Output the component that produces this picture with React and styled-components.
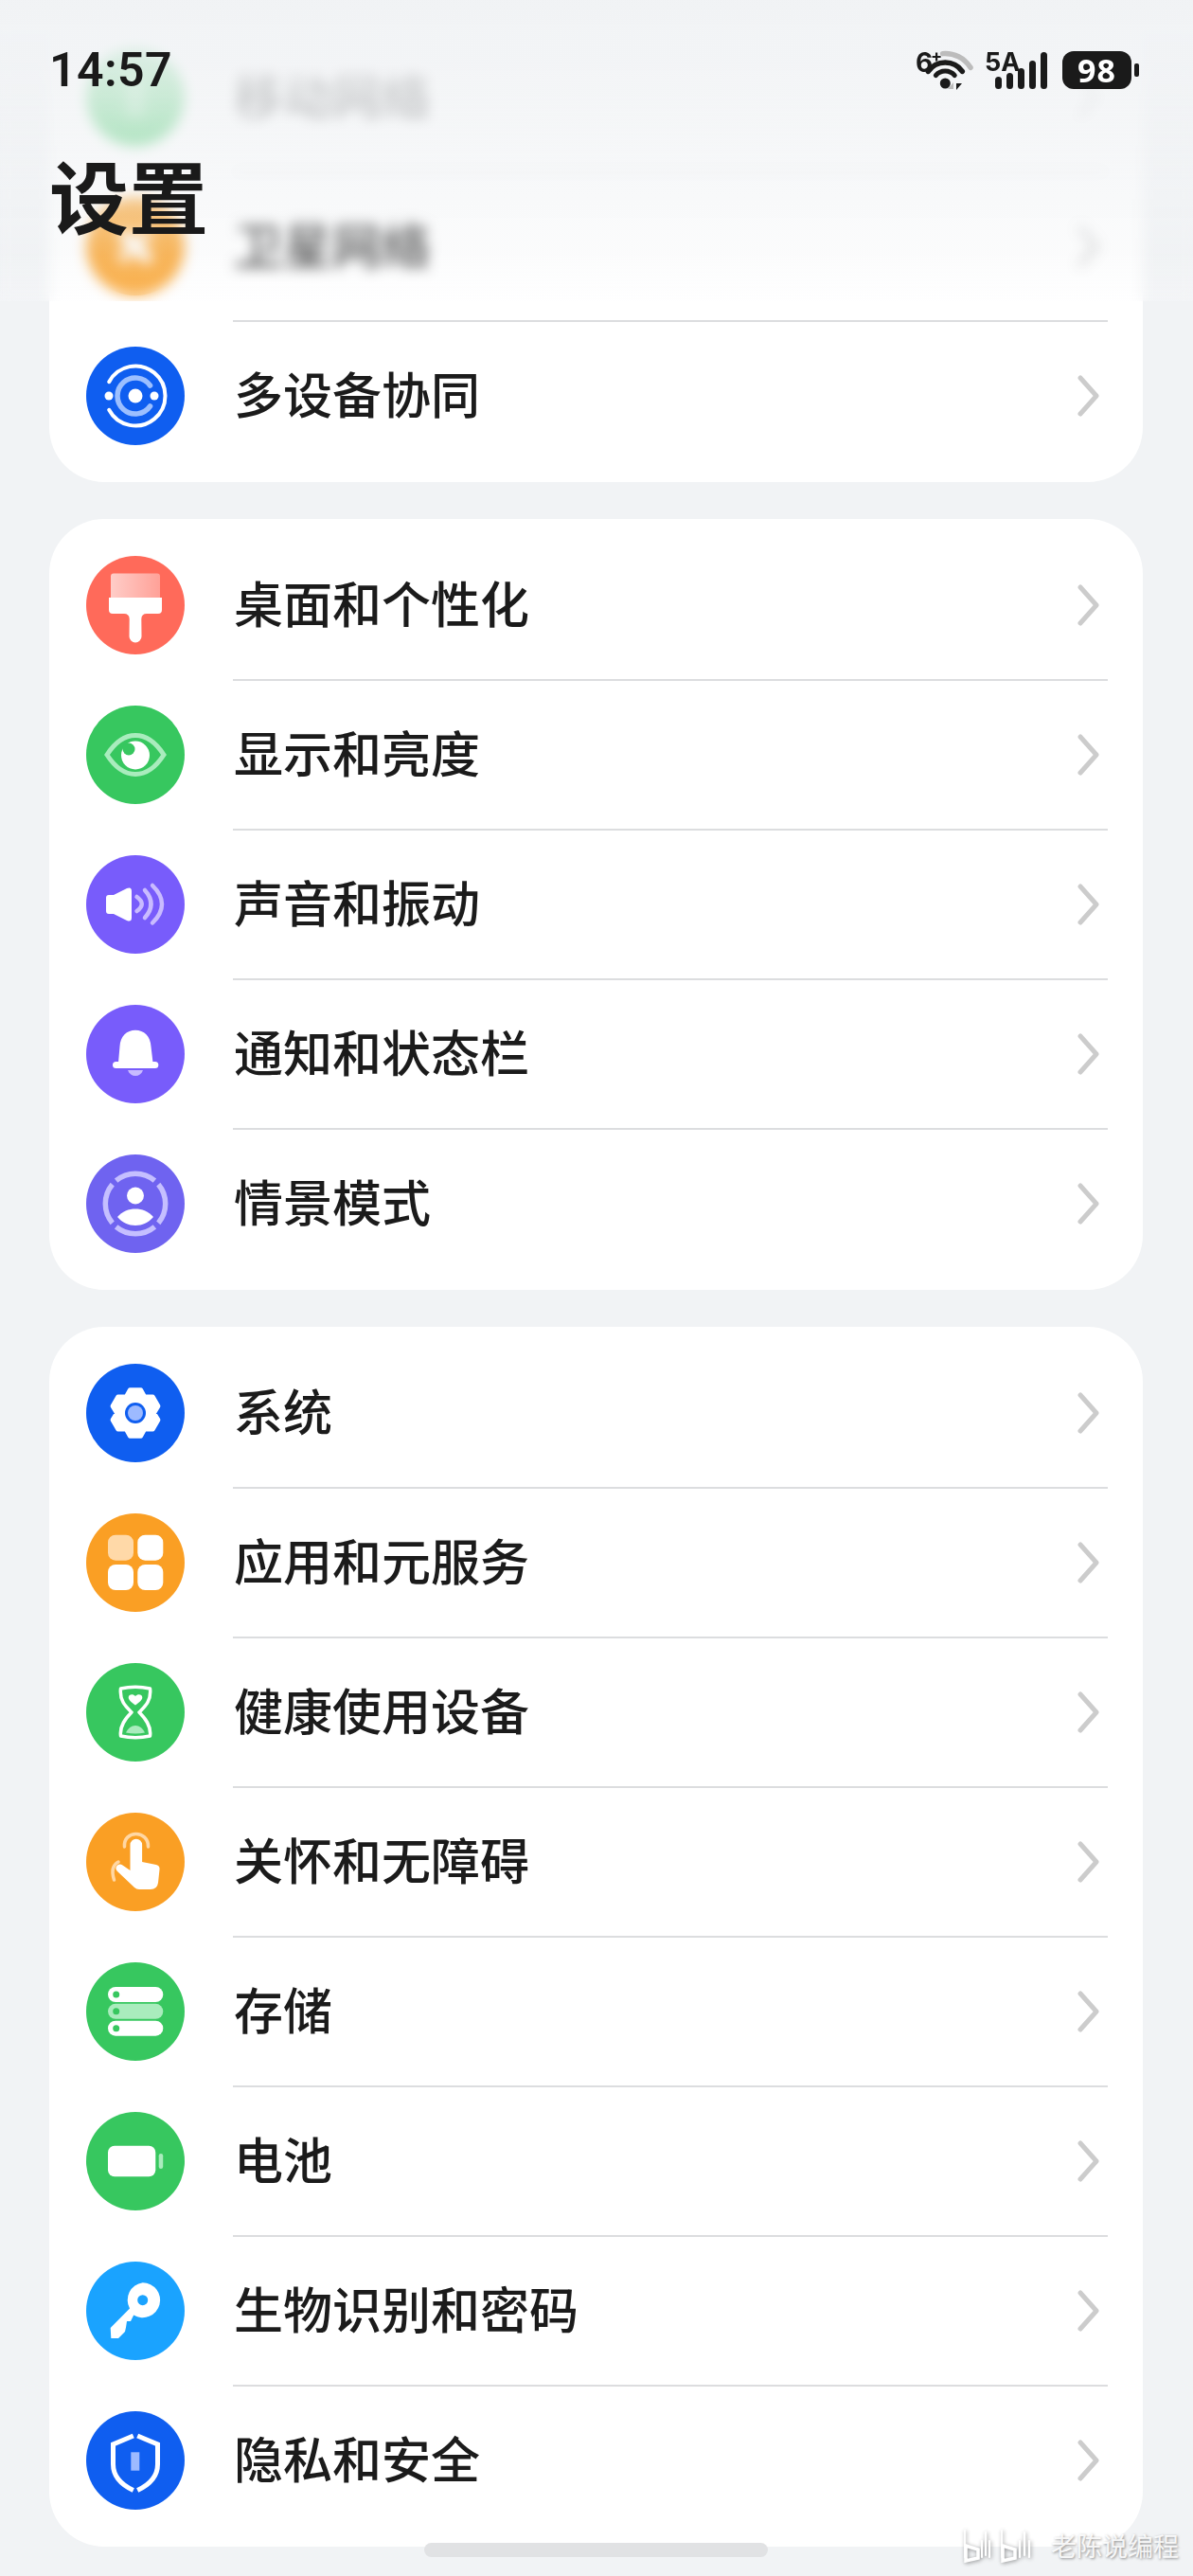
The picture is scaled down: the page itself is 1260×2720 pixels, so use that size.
import React from 'react';
import styled, { createGlobalStyle } from 'styled-components';

const CJK = '"Noto Sans CJK SC", "Noto Sans", sans-serif';

const Global = createGlobalStyle`
  html, body { margin: 0; padding: 0; background: #f1f3f5; }
  body { font-family: ${CJK}; }
`;

const Screen = styled.div`
  position: relative;
  width: 1260px;
  height: 2720px;
  overflow: hidden;
  background: #f1f3f5;
`;

const List = styled.main`
  display: flex;
  flex-direction: column;
  gap: 39px;
  padding: 11px 53px 0 52px;
`;

const Card = styled.section`
  background: #fff;
  border-radius: 58px;
  padding: 12px 0;
`;

const Row = styled.div`
  display: flex;
  align-items: center;
  height: 158px;
  padding-left: 39px;
`;

const Disc = styled.span`
  flex: none;
  width: 104px;
  height: 104px;
  border-radius: 50%;
  background: ${p => p.$bg};
`;

const Glyph = styled.svg`
  display: block;
  width: 104px;
  height: 104px;
`;

const RowBody = styled.div`
  flex: 1;
  align-self: stretch;
  display: flex;
  align-items: center;
  justify-content: space-between;
  margin: 0 37px -1px 51px;
  padding: 0 8px 0 1px;
  border-bottom: 2px solid ${p => (p.$last ? 'transparent' : '#dcdddf')};
`;

const Label = styled.span`
  font-size: 52px;
  line-height: 1;
  font-weight: 500;
  margin-bottom: 6px;
  color: #1b1b1b;
`;

const Chevron = styled.svg`
  flex: none;
  width: 24px;
  height: 44px;
`;

/* Frosted header pinned over the scrolled list */
const Header = styled.header`
  position: absolute;
  top: 0;
  left: 0;
  right: 0;
  height: 318px;
  &::before {
    content: '';
    position: absolute;
    inset: 0;
    backdrop-filter: blur(7px);
    background: linear-gradient(
      to bottom,
      rgba(241, 243, 245, 1) 0,
      rgba(241, 243, 245, 0.8) 100px,
      rgba(241, 243, 245, 0.58) 190px,
      rgba(241, 243, 245, 0.26) 270px,
      rgba(252, 252, 253, 0.2) 318px
    );
  }
`;

const StatusBar = styled.div`
  position: relative;
  display: flex;
  justify-content: space-between;
  align-items: flex-start;
  padding: 50px 57px 0 52px;
`;

const Clock = styled.span`
  font-family: Roboto, sans-serif;
  font-size: 50px;
  line-height: 48px;
  font-weight: 600;
  letter-spacing: 0.4px;
  color: #1a1a1a;
`;

const Indicators = styled.div`
  display: flex;
  align-items: flex-start;
`;

const WifiBlock = styled.div`
  position: relative;
  width: 72px;
  height: 50px;
`;

const NetTag = styled.span`
  position: absolute;
  top: ${p => p.$top}px;
  left: ${p => p.$left}px;
  font-family: Inter, Roboto, sans-serif;
  font-size: ${p => p.$size}px;
  line-height: 1;
  font-weight: 700;
  color: #1a1a1a;
`;

const SignalBlock = styled.div`
  position: relative;
  width: 66px;
  height: 50px;
  margin-left: 8px;
`;

const StatusSvg = styled.svg`
  display: block;
`;

const BatteryWrap = styled.div`
  display: flex;
  align-items: center;
  margin: 4px 0 0 16px;
  gap: 3px;
`;

const BatteryBody = styled.span`
  width: 73px;
  height: 40px;
  border-radius: 12px;
  background: #1a1a1a;
  color: #fff;
  font-family: "Noto Sans", Inter, sans-serif;
  font-size: 34px;
  line-height: 40px;
  font-weight: 700;
  text-align: center;
  letter-spacing: 1px;
`;

const BatteryCap = styled.span`
  width: 5px;
  height: 14px;
  border-radius: 2px;
  background: #1a1a1a;
`;

const Title = styled.h1`
  position: relative;
  margin: 59px 0 0 52px;
  font-size: 84px;
  line-height: 92px;
  font-weight: 700;
  color: #1a1a1a;
`;

const HomeBar = styled.div`
  position: absolute;
  left: 448px;
  top: 2685px;
  width: 363px;
  height: 15px;
  border-radius: 8px;
  background: #e1e2e4;
`;

const Watermark = styled.div`
  position: absolute;
  top: 2670px;
  left: 1017px;
  display: flex;
  align-items: center;
  gap: 13px;
  color: rgba(255, 255, 255, 0.9);
  font-size: 27px;
  line-height: 36px;
  text-shadow: 1px 1px 3px rgba(0, 0, 0, 0.45);
`;

const WatermarkLogo = styled.svg`
  display: block;
  filter: drop-shadow(1px 1px 2px rgba(0, 0, 0, 0.4));
`;

const polar = (cx, cy, r, deg) => {
  const a = ((deg - 90) * Math.PI) / 180;
  return [cx + r * Math.cos(a), cy + r * Math.sin(a)];
};

const arc = (cx, cy, r, from, to) => {
  const [x1, y1] = polar(cx, cy, r, from);
  const [x2, y2] = polar(cx, cy, r, to);
  const large = to - from > 180 ? 1 : 0;
  return `M${x1.toFixed(2)} ${y1.toFixed(2)}A${r} ${r} 0 ${large} 1 ${x2.toFixed(2)} ${y2.toFixed(2)}`;
};

const gearOutline = (() => {
  const pts = [];
  for (let k = 0; k < 6; k++) {
    const a = 60 * k;
    pts.push(polar(52, 52, 25, a - 13), polar(52, 52, 25, a + 13), polar(52, 52, 19.5, a + 30));
  }
  return pts.map(p => p.map(n => n.toFixed(2)).join(',')).join(' ');
})();

const SatelliteGlyph = () => (
  <g fill="#fff">
    <rect x="46" y="30" width="12" height="44" rx="3" transform="rotate(-45 52 52)" />
    <rect x="30" y="44" width="44" height="14" rx="3" transform="rotate(-45 52 52)" opacity=".7" />
  </g>
);

const MobileGlyph = () => (
  <g fill="#fff" opacity=".3">
    <rect x="42" y="30" width="20" height="44" rx="5" />
  </g>
);

const LinkGlyph = () => (
  <g fill="none" strokeLinecap="round">
    <path d={arc(52, 52, 31.5, -62, 242)} stroke="#fff" strokeWidth="4" />
    <path d={arc(52, 52, 19, 125, 415)} stroke="#9cbfff" strokeWidth="5.5" />
    <circle cx="52" cy="52" r="7.5" fill="#fff" />
    <circle cx="24" cy="52" r="4.5" fill="#fff" />
    <circle cx="72" cy="52" r="4.5" fill="#fff" />
  </g>
);

const BrushGlyph = () => (
  <>
    <defs>
      <linearGradient id="brushHead" x1="0" x2="1" y1="0" y2="0">
        <stop offset="0" stopColor="#ffcdc8" />
        <stop offset="1" stopColor="#ffa198" />
      </linearGradient>
    </defs>
    <path d="M29 18.5H75q3 0 3 3V44H26V21.5q0-3 3-3Z" fill="url(#brushHead)" />
    <path
      d="M24 44H80V57q0 4-4 4H64q-5.500 0-5.700 5.500L58.500 85a6.500 6.500 0 0 1-13 0L45.700 66.500Q45.500 61 40 61H28q-4 0-4-4Z"
      fill="#fff"
    />
  </>
);

const EyeGlyph = () => (
  <>
    <path
      d="M22 52C31 38 41 31.5 52 31.5S73 38 82 52C73 66 63 72.500 52 72.500S31 66 22 52Z"
      fill="none"
      stroke="#a9ecbd"
      strokeWidth="5"
    />
    <circle cx="52" cy="52.500" r="15" fill="#fff" />
    <circle cx="45" cy="46" r="6.5" fill="#37c75f" />
  </>
);

const SpeakerGlyph = () => (
  <>
    <path
      d="M24 42Q21 42 21 45V59Q21 62 24 62H29L43 69Q48 71 48 66V38Q48 33 43 35L29 42Z"
      fill="#fff"
    />
    <g fill="none" stroke="#c9bbff" strokeWidth="4.500" strokeLinecap="round">
      <path d="M53.500 44Q64 51.500 53.500 59" />
      <path d="M62 37Q75 51.500 62 66" />
      <path d="M70 32Q90 51.500 70 71.500" />
    </g>
  </>
);

const BellGlyph = () => (
  <>
    <path d="M34 61L35.500 44C36 33 43 26.700 52 26.700S68 33 68.500 44L70.500 61Z" fill="#fff" />
    <rect x="28" y="60" width="48.300" height="7" rx="3.500" fill="#fff" />
    <path d="M44 69H60C58.500 73 55.500 75 52 75S45.500 73 44 69Z" fill="#c8baff" />
  </>
);

const ProfileGlyph = () => (
  <>
    <g fill="none" stroke="#c5bfff" strokeWidth="5.500">
      {[0, 90, 180, 270].map(a => (
        <path key={a} d={arc(52, 52, 31.7, a - 40, a + 40)} />
      ))}
    </g>
    <circle cx="52" cy="43.500" r="9" fill="#fff" />
    <path d="M33 66C38 60 45 57.500 52 57.500S66 60 71 66C66 72 59 75 52 75S38 72 33 66Z" fill="#fff" />
  </>
);

const GearGlyph = () => (
  <>
    <polygon points={gearOutline} fill="#fff" stroke="#fff" strokeWidth="5" strokeLinejoin="round" />
    <circle cx="52" cy="52" r="11" fill="#0f5ef0" />
    <circle cx="52" cy="52" r="8" fill="#9dbaff" />
  </>
);

const AppsGlyph = () => (
  <>
    <rect x="23" y="22.700" width="27" height="27" rx="8" fill="#ffd9a8" />
    <rect x="54.300" y="22.700" width="27" height="27" rx="8" fill="#fff" />
    <rect x="23" y="54" width="27" height="27" rx="8" fill="#fff" />
    <rect x="54.300" y="54" width="27" height="27" rx="8" fill="#fff" />
  </>
);

const HourglassGlyph = () => (
  <>
    <path
      d="M36.500 27Q52 23.500 67.500 27C69 40 62 46 56 52C62 58 69 66 67.500 77Q52 80.500 36.500 77C35 66 42 58 48 52C42 46 35 40 36.500 27Z"
      fill="none"
      stroke="#fff"
      strokeWidth="3.500"
      strokeLinejoin="round"
    />
    <path d="M52 44.500C47 41 44.700 38.700 44.700 36.300C44.700 33 49.500 32 52 35C54.500 32 59.300 33 59.300 36.300C59.300 38.700 57 41 52 44.500Z" fill="#fff" />
    <path d="M42 73.500C44 69 48 66 52 66S60 69 62 73.500Q52 75.500 42 73.500Z" fill="#a9ecbd" />
  </>
);

const TouchGlyph = () => (
  <>
    <path
      d="M46.500 34a6.300 6.300 0 0 1 12.600 0V52L74 55q4 1 3.500 5L76 74q-1 7-8 7H56q-3 0-5-2L33 62q-3-3-.5-6q3-2.500 6-.5L46.500 61Z"
      fill="#fff"
    />
    <g fill="none" stroke="#ffd7a3" strokeWidth="3.500" strokeLinecap="round">
      <path d="M40.500 36C39 18 66 18 65.500 36" />
      <path d="M34 52Q25 57 29.500 71" />
    </g>
  </>
);

const StorageGlyph = () => (
  <>
    <rect x="23" y="26" width="58.300" height="16" rx="8" fill="#fff" />
    <rect x="23" y="43.800" width="58.300" height="16" rx="8" fill="#a9ecbd" />
    <rect x="23" y="61.700" width="58.300" height="16" rx="8" fill="#fff" />
    <g fill="#37c75f">
      <circle cx="31.700" cy="34" r="3.500" />
      <circle cx="31.700" cy="51.800" r="3.500" />
      <circle cx="31.700" cy="69.700" r="3.500" />
    </g>
  </>
);

const BatteryGlyph = () => (
  <>
    <rect x="23" y="35.700" width="50.300" height="32.600" rx="7" fill="#fff" />
    <rect x="76.700" y="44" width="4.500" height="16" rx="2.200" fill="#a9ecbd" />
  </>
);

const KeyGlyph = () => (
  <>
    <path
      d="M59.700 22.200a18.500 18.500 0 1 1-9.500 34.400L47 63h-4l-1 6.500-1 4.500L34 81H26.300L25.700 70L46 49.500A18.500 18.500 0 0 1 59.700 22.200Z"
      fill="#fff"
    />
    <circle cx="59.700" cy="40.700" r="5.500" fill="#1aa3ff" />
  </>
);

const ShieldGlyph = () => (
  <>
    <g fill="none" stroke="#fff" strokeWidth="5">
      <path d="M49.800 26L28.500 35V56C28.500 70 38 78 49.800 83.500" />
      <path d="M54.200 26L75.500 35V56C75.500 70 66 78 54.200 83.500" />
    </g>
    <rect x="47.300" y="43.300" width="9" height="19.400" fill="#9dbaff" />
  </>
);

const groups = [
  [
    { label: '移动网络', bg: '#37c75f', Art: MobileGlyph },
    { label: '卫星网络', bg: '#fa9f24', Art: SatelliteGlyph },
    { label: '多设备协同', bg: '#0f5ef0', Art: LinkGlyph },
  ],
  [
    { label: '桌面和个性化', bg: '#ff6a5a', Art: BrushGlyph },
    { label: '显示和亮度', bg: '#37c75f', Art: EyeGlyph },
    { label: '声音和振动', bg: '#785cfb', Art: SpeakerGlyph },
    { label: '通知和状态栏', bg: '#785cfb', Art: BellGlyph },
    { label: '情景模式', bg: '#6f63f0', Art: ProfileGlyph },
  ],
  [
    { label: '系统', bg: '#0f5ef0', Art: GearGlyph },
    { label: '应用和元服务', bg: '#fa9f24', Art: AppsGlyph },
    { label: '健康使用设备', bg: '#37c75f', Art: HourglassGlyph },
    { label: '关怀和无障碍', bg: '#fa9f24', Art: TouchGlyph },
    { label: '存储', bg: '#37c75f', Art: StorageGlyph },
    { label: '电池', bg: '#37c75f', Art: BatteryGlyph },
    { label: '生物识别和密码', bg: '#1aa3ff', Art: KeyGlyph },
    { label: '隐私和安全', bg: '#0f5ef0', Art: ShieldGlyph },
  ],
];

const SettingRow = ({ label, bg, Art, last }) => (
  <Row>
    <Disc $bg={bg}>
      <Glyph viewBox="0 0 104 104">
        <Art />
      </Glyph>
    </Disc>
    <RowBody $last={last}>
      <Label>{label}</Label>
      <Chevron viewBox="0 0 24 44">
        <path
          d="M3 3L20 22L3 41"
          fill="none"
          stroke="#cccccc"
          strokeWidth="5"
          strokeLinecap="round"
          strokeLinejoin="round"
        />
      </Chevron>
    </RowBody>
  </Row>
);

const WifiIcon = () => (
  <StatusSvg width="72" height="50" viewBox="0 0 72 50">
    <circle cx="38.300" cy="38" r="5.500" fill="#1a1a1a" />
    <g fill="none" strokeLinecap="round">
      <path d={arc(38.300, 38, 13, -50, 50)} stroke="#1a1a1a" strokeWidth="5" />
      <path d={arc(38.300, 38, 22, -55, 55)} stroke="#1a1a1a" strokeWidth="5.500" />
      <path d={arc(38.300, 38, 31.500, -5, 58)} stroke="#bcbcbc" strokeWidth="5.500" />
    </g>
    <path d="M41 44L47 37V44Z" fill="#bcbcbc" />
    <path d="M50 38L56 38L50 45Z" fill="#1a1a1a" />
  </StatusSvg>
);

const SignalIcon = () => {
  const tops = [31, 27, 22, 14, 5];
  return (
    <StatusSvg width="66" height="50" viewBox="0 0 66 50">
      {tops.map((t, i) => (
        <rect key={t} x={11 + i * 12} y={t} width="7" height={44 - t} rx="3.500" fill="#1a1a1a" />
      ))}
    </StatusSvg>
  );
};

const BiliMark = () => (
  <WatermarkLogo width="80" height="36" viewBox="0 0 80 36">
    <g fill="none" stroke="#fff" strokeLinecap="round">
      <path d="M2 2V30" strokeWidth="1.800" />
      <path d="M3 18L16 22L16 31L3 34Z" strokeWidth="3.500" />
      <path d="M20 13V30M24 4V28M28 13V30" strokeWidth="2.200" />
      <path d="M41 2V30" strokeWidth="1.800" />
      <path d="M42 18L55 22L55 31L42 34Z" strokeWidth="3.500" />
      <path d="M60 13V30M65 4V28M70 13V30" strokeWidth="2.200" />
    </g>
  </WatermarkLogo>
);

export default function App() {
  return (
    <Screen>
      <Global />
      <List>
        {groups.map((rows, g) => (
          <Card key={g}>
            {rows.map((row, i) => (
              <SettingRow key={row.label} {...row} last={i === rows.length - 1} />
            ))}
          </Card>
        ))}
      </List>
      <Header>
        <StatusBar>
          <Clock>14:57</Clock>
          <Indicators>
            <WifiBlock>
              <NetTag $top={2} $left={7} $size={28}>6</NetTag>
              <NetTag $top={0} $left={23} $size={18}>+</NetTag>
              <WifiIcon />
            </WifiBlock>
            <SignalBlock>
              <NetTag $top={2} $left={0} $size={27}>5A</NetTag>
              <SignalIcon />
            </SignalBlock>
            <BatteryWrap>
              <BatteryBody>98</BatteryBody>
              <BatteryCap />
            </BatteryWrap>
          </Indicators>
        </StatusBar>
        <Title>设置</Title>
      </Header>
      <HomeBar />
      <Watermark>
        <BiliMark />
        <span>老陈说编程</span>
      </Watermark>
    </Screen>
  );
}
